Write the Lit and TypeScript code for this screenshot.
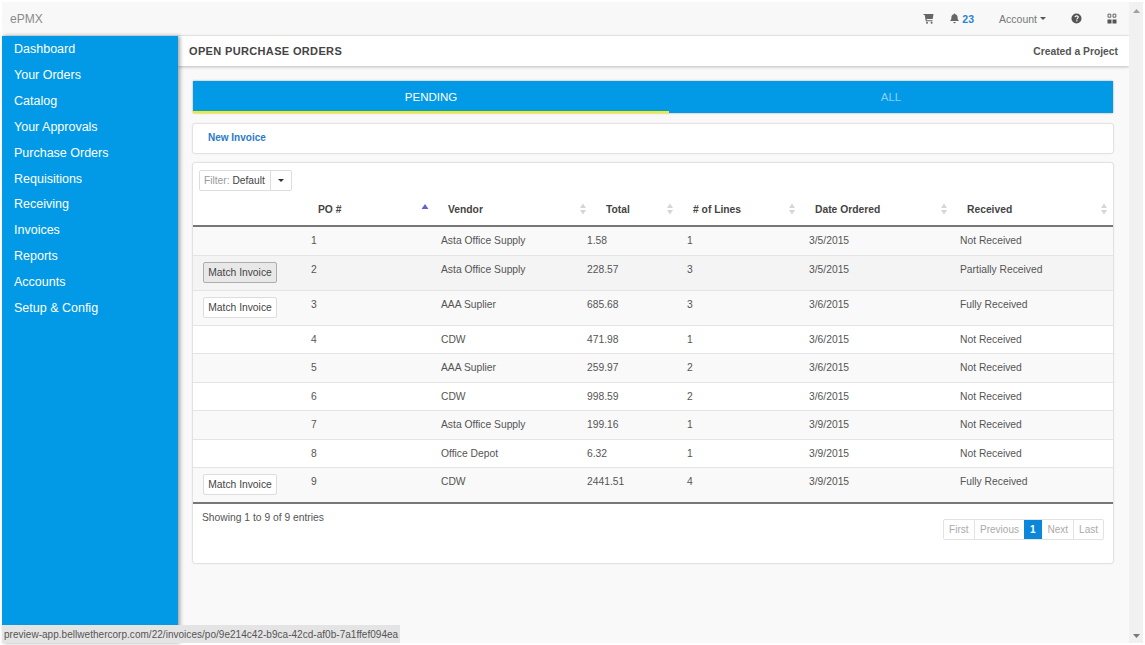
import { css, html, LitElement, svg } from "lit";
import { customElement } from "lit/decorators.js";

const NAV = [
  "Dashboard",
  "Your Orders",
  "Catalog",
  "Your Approvals",
  "Purchase Orders",
  "Requisitions",
  "Receiving",
  "Invoices",
  "Reports",
  "Accounts",
  "Setup & Config",
];

interface Order {
  po: number;
  vendor: string;
  total: string;
  lines: number;
  date: string;
  received: string;
  match?: boolean;
  hover?: boolean;
}

const ORDERS: Order[] = [
  { po: 1, vendor: "Asta Office Supply", total: "1.58", lines: 1, date: "3/5/2015", received: "Not Received" },
  { po: 2, vendor: "Asta Office Supply", total: "228.57", lines: 3, date: "3/5/2015", received: "Partially Received", match: true, hover: true },
  { po: 3, vendor: "AAA Suplier", total: "685.68", lines: 3, date: "3/6/2015", received: "Fully Received", match: true },
  { po: 4, vendor: "CDW", total: "471.98", lines: 1, date: "3/6/2015", received: "Not Received" },
  { po: 5, vendor: "AAA Suplier", total: "259.97", lines: 2, date: "3/6/2015", received: "Not Received" },
  { po: 6, vendor: "CDW", total: "998.59", lines: 2, date: "3/6/2015", received: "Not Received" },
  { po: 7, vendor: "Asta Office Supply", total: "199.16", lines: 1, date: "3/9/2015", received: "Not Received" },
  { po: 8, vendor: "Office Depot", total: "6.32", lines: 1, date: "3/9/2015", received: "Not Received" },
  { po: 9, vendor: "CDW", total: "2441.51", lines: 4, date: "3/9/2015", received: "Fully Received", match: true },
];

const HEADERS = ["PO #", "Vendor", "Total", "# of Lines", "Date Ordered", "Received"];

const sortIcon = (active: boolean) => svg`
  <svg class="sort" width="8" height="12" viewBox="0 0 8 12">
    ${active
      ? svg`<path d="M4 1 7.500 6H.5z" fill="#6264cc"/>`
      : svg`<path d="M4 .5 7 5H1zM4 11.500 1 7h6z" fill="#d4d6d8"/>`}
  </svg>`;

@customElement("app-root")
export class AppRoot extends LitElement {
  static styles = css`
    :host {
      display: block;
      width: 1145px;
      height: 645px;
      position: relative;
      overflow: hidden;
      background: #fff;
      font-family: "Liberation Sans", Arial, sans-serif;
      color: #444;
    }
    .shell {
      display: flex;
      height: 641px;
      padding: 2px;
    }
    .app {
      flex: 1;
      display: flex;
      flex-direction: column;
      min-width: 0;
    }
    .topbar {
      height: 34px;
      flex: none;
      display: flex;
      align-items: center;
      background: #f8f8f8;
      border-bottom: 1px solid #ececec;
      box-sizing: border-box;
      padding-left: 8px;
      color: #777;
      font-size: 12px;
    }
    .brand {
      flex: 1;
      font-size: 12px;
      color: #8a8a8a;
    }
    .cart { margin-right: 15px; }
    .bell { margin-right: 2px; }
    .count {
      color: #2a86d0;
      font-weight: bold;
      font-size: 10.5px;
      margin-right: 25px;
    }
    .account {
      font-size: 10.5px;
      color: #777;
      margin-right: 25px;
      display: flex;
      align-items: center;
      gap: 3px;
    }
    .caret {
      width: 0;
      height: 0;
      border-left: 3.5px solid transparent;
      border-right: 3.5px solid transparent;
      border-top: 3.5px solid #555;
    }
    .help { margin-right: 25px; }
    .apps { margin-right: 12px; }
    .body {
      flex: 1;
      display: flex;
      min-height: 0;
    }
    .sidebar {
      width: 176px;
      flex: none;
      background: #0299e6;
      box-shadow: 2px 0 4px rgba(0, 0, 0, 0.35);
      position: relative;
      z-index: 2;
    }
    .sidebar a {
      display: block;
      height: 25.92px;
      line-height: 26px;
      padding-left: 12px;
      color: #fff;
      font-size: 12.5px;
    }
    .main {
      flex: 1;
      min-width: 0;
      background: #f9f9f9;
      display: flex;
      flex-direction: column;
    }
    .pagehead {
      height: 30px;
      flex: none;
      display: flex;
      align-items: center;
      justify-content: space-between;
      background: #fff;
      box-shadow: 0 1px 3px rgba(0, 0, 0, 0.25);
      padding: 0 11px;
      box-sizing: border-box;
    }
    .pagehead h1 {
      margin: 0;
      font-size: 11px;
      font-weight: bold;
      letter-spacing: 0.35px;
      color: #444;
    }
    .pagehead span {
      font-size: 10.3px;
      font-weight: bold;
      color: #555;
    }
    .content {
      flex: 1;
      display: flex;
      flex-direction: column;
      padding: 15px 15px 0;
      width: 920px;
    }
    .tabs {
      height: 32px;
      flex: none;
      display: flex;
      background: #0299e6;
      box-shadow: 0 0 2px rgba(0, 0, 0, 0.35);
      font-size: 11.5px;
      margin-bottom: 11px;
    }
    .tab {
      display: flex;
      align-items: center;
      justify-content: center;
      color: #fff;
      box-sizing: border-box;
    }
    .tab.active {
      width: 476px;
      border-bottom: 2px solid #f5ee00;
      padding-top: 2px;
    }
    .tab.rest {
      flex: 1;
      color: rgba(255, 255, 255, 0.55);
    }
    .card {
      background: #fff;
      box-shadow: 0 0 2px rgba(0, 0, 0, 0.35);
      border-radius: 2px;
    }
    .actions {
      height: 29px;
      flex: none;
      display: flex;
      align-items: center;
      padding: 0 0 3px 15px;
      box-sizing: border-box;
      margin-bottom: 10px;
      font-size: 10px;
      font-weight: bold;
      color: #2a7bc8;
    }
    .panel {
      height: 400px;
      flex: none;
      display: flex;
      flex-direction: column;
    }
    .filterline {
      height: 34px;
      flex: none;
      padding: 7px 0 0 6px;
      box-sizing: border-box;
    }
    .filter {
      display: inline-flex;
      height: 21px;
      border: 1px solid #ddd;
      border-radius: 2px;
      font-size: 10.2px;
      color: #444;
      box-sizing: border-box;
    }
    .filter .label {
      display: flex;
      align-items: center;
      padding: 0 5px 0 4px;
      border-right: 1px solid #ddd;
      gap: 3px;
    }
    .filter em {
      font-style: normal;
      color: #999;
    }
    .filter .drop {
      display: flex;
      align-items: center;
      padding: 0 7px;
    }
    .filter .caret {
      border-top-color: #333;
    }
    .head,
    .row {
      display: grid;
    }
    .head {
      grid-template-columns: 118px 130px 158px 87px 122px 152px 1fr;
      height: 28px;
      align-items: start;
      border-bottom: 2px solid #777;
      font-size: 10.3px;
      font-weight: bold;
      color: #444;
      box-sizing: content-box;
    }
    .hcell {
      display: flex;
      justify-content: space-between;
      align-items: center;
      height: 24px;
      padding: 0 12px 0 7px;
    }
    .hcell:last-child {
      padding-right: 5px;
    }
    .sort {
      flex: none;
    }
    .row {
      grid-template-columns: 111px 130px 146px 100px 122px 151px 1fr;
      font-size: 10.3px;
      color: #555;
      border-top: 1px solid #e4e4e4;
      box-sizing: border-box;
      padding-top: 8px;
      height: 28.4px;
    }
    .row:first-of-type {
      border-top: none;
      height: 28px;
    }
    .row.odd {
      background: #f9f9f9;
    }
    .row.hover {
      background: #f4f4f4;
    }
    .row.tall {
      height: 35px;
    }
    .row > div {
      padding-left: 7px;
      line-height: 12px;
    }
    .row > div.btncell {
      padding-left: 10px;
      height: 0;
      margin-top: -2px;
    }
    .btn {
      display: block;
      width: 74px;
      height: 21px;
      margin: 0;
      padding: 0;
      background: #fff;
      border: 1px solid #ddd;
      border-radius: 2px;
      font: 10.3px "Liberation Sans", Arial, sans-serif;
      color: #444;
    }
    .btn.pressed {
      background: #e8e8e8;
      border-color: #adadad;
    }
    .rows {
      border-bottom: 2px solid #777;
    }
    .foot {
      flex: 1;
      display: flex;
      justify-content: space-between;
      font-size: 10.3px;
      color: #555;
      padding: 8px 9px 0;
    }
    .pager {
      display: flex;
      height: 21px;
      margin-top: 7px;
      border: 1px solid #e2e2e2;
      border-radius: 2px;
      box-sizing: border-box;
      color: #aaa;
      font-size: 10px;
    }
    .pager span {
      display: flex;
      align-items: center;
      padding: 0 5px;
      border-left: 1px solid #e2e2e2;
    }
    .pager span:first-child {
      border-left: none;
      padding: 0 5.5px;
    }
    .pager span.on {
      background: #0a87d8;
      color: #fff;
      font-weight: bold;
      border-left: none;
      padding: 0 6px;
    }
    .pager span.on + span {
      border-left: none;
      padding-left: 6px;
    }
    .scrollbar {
      width: 14px;
      flex: none;
      background: #f1f1f1;
      display: flex;
      flex-direction: column;
      justify-content: space-between;
      align-items: center;
      padding: 7px 0 5px;
      box-sizing: border-box;
    }
    .status {
      position: absolute;
      left: 2px;
      bottom: 2px;
      width: 398px;
      height: 18px;
      background: #e4e4e4;
      font-size: 10px;
      line-height: 19px;
      padding-left: 2px;
      box-sizing: border-box;
      color: #555;
      letter-spacing: 0.03px;
      white-space: nowrap;
      z-index: 3;
    }
  `;

  private _header() {
    return html`<div class="head">
      <div></div>
      ${HEADERS.map(
        (h, i) => html`<div class="hcell"><span>${h}</span>${sortIcon(i === 0)}</div>`
      )}
    </div>`;
  }

  private _row(o: Order, i: number) {
    const cls = `row ${i % 2 === 0 ? "odd" : ""} ${o.hover ? "hover" : ""} ${o.match ? "tall" : ""}`;
    return html`<div class=${cls}>
      <div class="btncell">
        ${o.match
          ? html`<button class="btn ${o.hover ? "pressed" : ""}">Match Invoice</button>`
          : ""}
      </div>
      <div>${o.po}</div>
      <div>${o.vendor}</div>
      <div>${o.total}</div>
      <div>${o.lines}</div>
      <div>${o.date}</div>
      <div>${o.received}</div>
    </div>`;
  }

  protected render() {
    return html`
      <div class="shell">
        <div class="app">
          <div class="topbar">
            <span class="brand">ePMX</span>
            <svg class="cart" width="11" height="11" viewBox="0 0 11 11">
              <path d="M.5 1h10l-.8 5H3.600l.2 1.200h5.700v1H2.800L1.700 2H.5z" fill="#666" />
              <circle cx="4" cy="9.700" r="1" fill="#666" />
              <circle cx="8.600" cy="9.700" r="1" fill="#666" />
            </svg>
            <svg class="bell" width="11" height="11" viewBox="0 0 11 11">
              <path d="M5.500 0.500c.5 0 .8.300.8.800 1.600.4 2.300 1.600 2.300 3.200 0 1.700.5 2.600 1.400 3.500H1c.9-.9 1.400-1.800 1.400-3.500 0-1.600.7-2.800 2.300-3.200 0-.5.3-.8.8-.8zM4.300 9h2.400a1.200 1.200 0 0 1-2.400 0z" fill="#666" />
            </svg>
            <span class="count">23</span>
            <span class="account">Account <i class="caret"></i></span>
            <svg class="help" width="11" height="11" viewBox="0 0 11 11">
              <circle cx="5.500" cy="5.500" r="5" fill="#555" />
              <path d="M3.900 4.200c.2-.9.800-1.300 1.700-1.300 1 0 1.600.5 1.600 1.300 0 1.200-1.400 1.100-1.400 2.200" fill="none" stroke="#fff" stroke-width="1.100" />
              <rect x="5.200" y="7.200" width="1.200" height="1.200" fill="#fff" />
            </svg>
            <svg class="apps" width="10" height="11" viewBox="0 0 10 11">
              <path d="M.5 6.500h4v4h-4zM5.500 6.500h4v4h-4z" fill="#555" />
              <path d="M1 1.200h2.800v3H1zM6 1.200h2.800v3H6z" fill="none" stroke="#666" stroke-width="1" />
            </svg>
          </div>
          <div class="body">
            <nav class="sidebar">${NAV.map((n) => html`<a>${n}</a>`)}</nav>
            <div class="main">
              <header class="pagehead">
                <h1>OPEN PURCHASE ORDERS</h1>
                <span>Created a Project</span>
              </header>
              <div class="content">
                <div class="tabs">
                  <div class="tab active">PENDING</div>
                  <div class="tab rest">ALL</div>
                </div>
                <div class="card actions">New Invoice</div>
                <div class="card panel">
                  <div class="filterline">
                    <div class="filter">
                      <div class="label"><em>Filter:</em> Default</div>
                      <div class="drop"><i class="caret"></i></div>
                    </div>
                  </div>
                  ${this._header()}
                  <div class="rows">${ORDERS.map((o, i) => this._row(o, i))}</div>
                  <div class="foot">
                    <div>Showing 1 to 9 of 9 entries</div>
                    <div class="pager">
                      <span>First</span><span>Previous</span><span class="on">1</span><span>Next</span><span>Last</span>
                    </div>
                  </div>
                </div>
              </div>
            </div>
          </div>
        </div>
        <div class="scrollbar">
          <svg width="7" height="4" viewBox="0 0 7 4"><path d="M3.500 0 7 4H0z" fill="#a0a0a0" /></svg>
          <svg width="7" height="4" viewBox="0 0 7 4"><path d="M0 0h7L3.500 4z" fill="#777" /></svg>
        </div>
      </div>
      <div class="status">preview-app.bellwethercorp.com/22/invoices/po/9e214c42-b9ca-42cd-af0b-7a1ffef094ea</div>
    `;
  }
}
